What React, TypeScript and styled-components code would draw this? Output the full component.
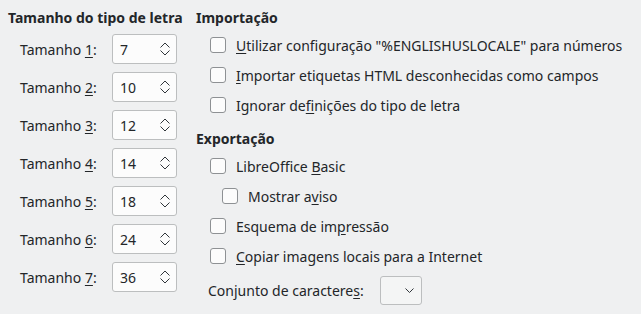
import React from "react";
import styled, { createGlobalStyle } from "styled-components";

const GlobalStyle = createGlobalStyle`
  html, body {
    margin: 0;
    padding: 0;
    background: #eff0f1;
  }
  body {
    font-family: "Noto Sans", "DejaVu Sans", sans-serif;
    font-size: 14px;
    color: #232629;
  }
`;

const Page = styled.div`
  display: flex;
  width: 641px;
  height: 314px;
  padding: 8px 0 0 8px;
  box-sizing: border-box;
`;

const LeftColumn = styled.div`
  width: 188px;
  display: flex;
  flex-direction: column;
`;

const RightColumn = styled.div`
  flex: 1;
  display: flex;
  flex-direction: column;
`;

const Heading = styled.div<{ $top?: number }>`
  height: 20px;
  line-height: 20px;
  font-weight: 700;
  margin-top: ${(p) => p.$top ?? 0}px;
`;

const SizeList = styled.div`
  display: flex;
  flex-direction: column;
  gap: 8px;
  margin-top: 6px;
`;

const SizeRow = styled.div`
  display: flex;
  align-items: center;
  height: 30px;
  padding-left: 12px;
`;

const SizeLabel = styled.span`
  width: 92px;
`;

const Mnemonic = styled.u`
  text-decoration-thickness: 1px;
  text-underline-offset: 2px;
`;

const SpinBox = styled.div`
  width: 65px;
  height: 30px;
  box-sizing: border-box;
  border: 1px solid #bcbebf;
  border-radius: 3px;
  background: #fcfcfc;
  display: flex;
  align-items: center;
  padding: 0 5px 0 7px;
`;

const SpinValue = styled.span`
  flex: 1;
`;

const SpinArrows = styled.svg`
  width: 12px;
  height: 16px;
`;

const CheckList = styled.div`
  display: flex;
  flex-direction: column;
  margin-top: 2px;
`;

const CheckRow = styled.label<{ $indent?: number }>`
  display: flex;
  align-items: center;
  height: 30px;
  padding-left: ${(p) => 14 + (p.$indent ?? 0)}px;
  gap: 10px;
`;

const CheckBox = styled.span`
  width: 16px;
  height: 16px;
  box-sizing: border-box;
  border: 1px solid #8e9194;
  border-radius: 3px;
  background: #fcfcfc;
`;

const CharsetRow = styled.div`
  display: flex;
  align-items: center;
  height: 30px;
  margin-top: 4px;
  padding-left: 12px;
  gap: 16px;
`;

const Dropdown = styled.div`
  width: 42px;
  height: 29px;
  box-sizing: border-box;
  border: 1px solid #bcbebf;
  border-radius: 3px;
  background: #f4f5f5;
  display: flex;
  align-items: center;
  justify-content: flex-end;
  padding-right: 7px;
`;

const sizes = ["7", "10", "12", "14", "18", "24", "36"];

const Arrows = () => (
  <SpinArrows viewBox="0 0 12 16">
    <path d="M1.5 6.5 L6 2 L10.5 6.5" fill="none" stroke="#31363b" strokeWidth="1" />
    <path d="M1.5 9.5 L6 14 L10.5 9.5" fill="none" stroke="#31363b" strokeWidth="1" />
  </SpinArrows>
);

export default function App() {
  return (
    <>
      <GlobalStyle />
      <Page>
        <LeftColumn>
          <Heading>Tamanho do tipo de letra</Heading>
          <SizeList>
            {sizes.map((v, i) => (
              <SizeRow key={i}>
                <SizeLabel>
                  Tamanho <Mnemonic>{i + 1}</Mnemonic>:
                </SizeLabel>
                <SpinBox>
                  <SpinValue>{v}</SpinValue>
                  <Arrows />
                </SpinBox>
              </SizeRow>
            ))}
          </SizeList>
        </LeftColumn>
        <RightColumn>
          <Heading>Importação</Heading>
          <CheckList>
            <CheckRow>
              <CheckBox />
              <span>
                <Mnemonic>U</Mnemonic>tilizar configuração "%ENGLISHUSLOCALE" para números
              </span>
            </CheckRow>
            <CheckRow>
              <CheckBox />
              <span>
                <Mnemonic>I</Mnemonic>mportar etiquetas HTML desconhecidas como campos
              </span>
            </CheckRow>
            <CheckRow>
              <CheckBox />
              <span>
                Ignorar de<Mnemonic>f</Mnemonic>inições do tipo de letra
              </span>
            </CheckRow>
          </CheckList>
          <Heading $top={9}>Exportação</Heading>
          <CheckList>
            <CheckRow>
              <CheckBox />
              <span>
                LibreOffice <Mnemonic>B</Mnemonic>asic
              </span>
            </CheckRow>
            <CheckRow $indent={12}>
              <CheckBox />
              <span>
                Mostrar a<Mnemonic>v</Mnemonic>iso
              </span>
            </CheckRow>
            <CheckRow>
              <CheckBox />
              <span>
                Esquema de im<Mnemonic>p</Mnemonic>ressão
              </span>
            </CheckRow>
            <CheckRow>
              <CheckBox />
              <span>
                <Mnemonic>C</Mnemonic>opiar imagens locais para a Internet
              </span>
            </CheckRow>
          </CheckList>
          <CharsetRow>
            <span>
              Conjunto de caractere<Mnemonic>s</Mnemonic>:
            </span>
            <Dropdown>
              <svg width="9" height="5" viewBox="0 0 9 5">
                <path d="M0.5 0.5 L4.5 4.5 L8.5 0.5" fill="none" stroke="#31363b" strokeWidth="1" />
              </svg>
            </Dropdown>
          </CharsetRow>
        </RightColumn>
      </Page>
    </>
  );
}
